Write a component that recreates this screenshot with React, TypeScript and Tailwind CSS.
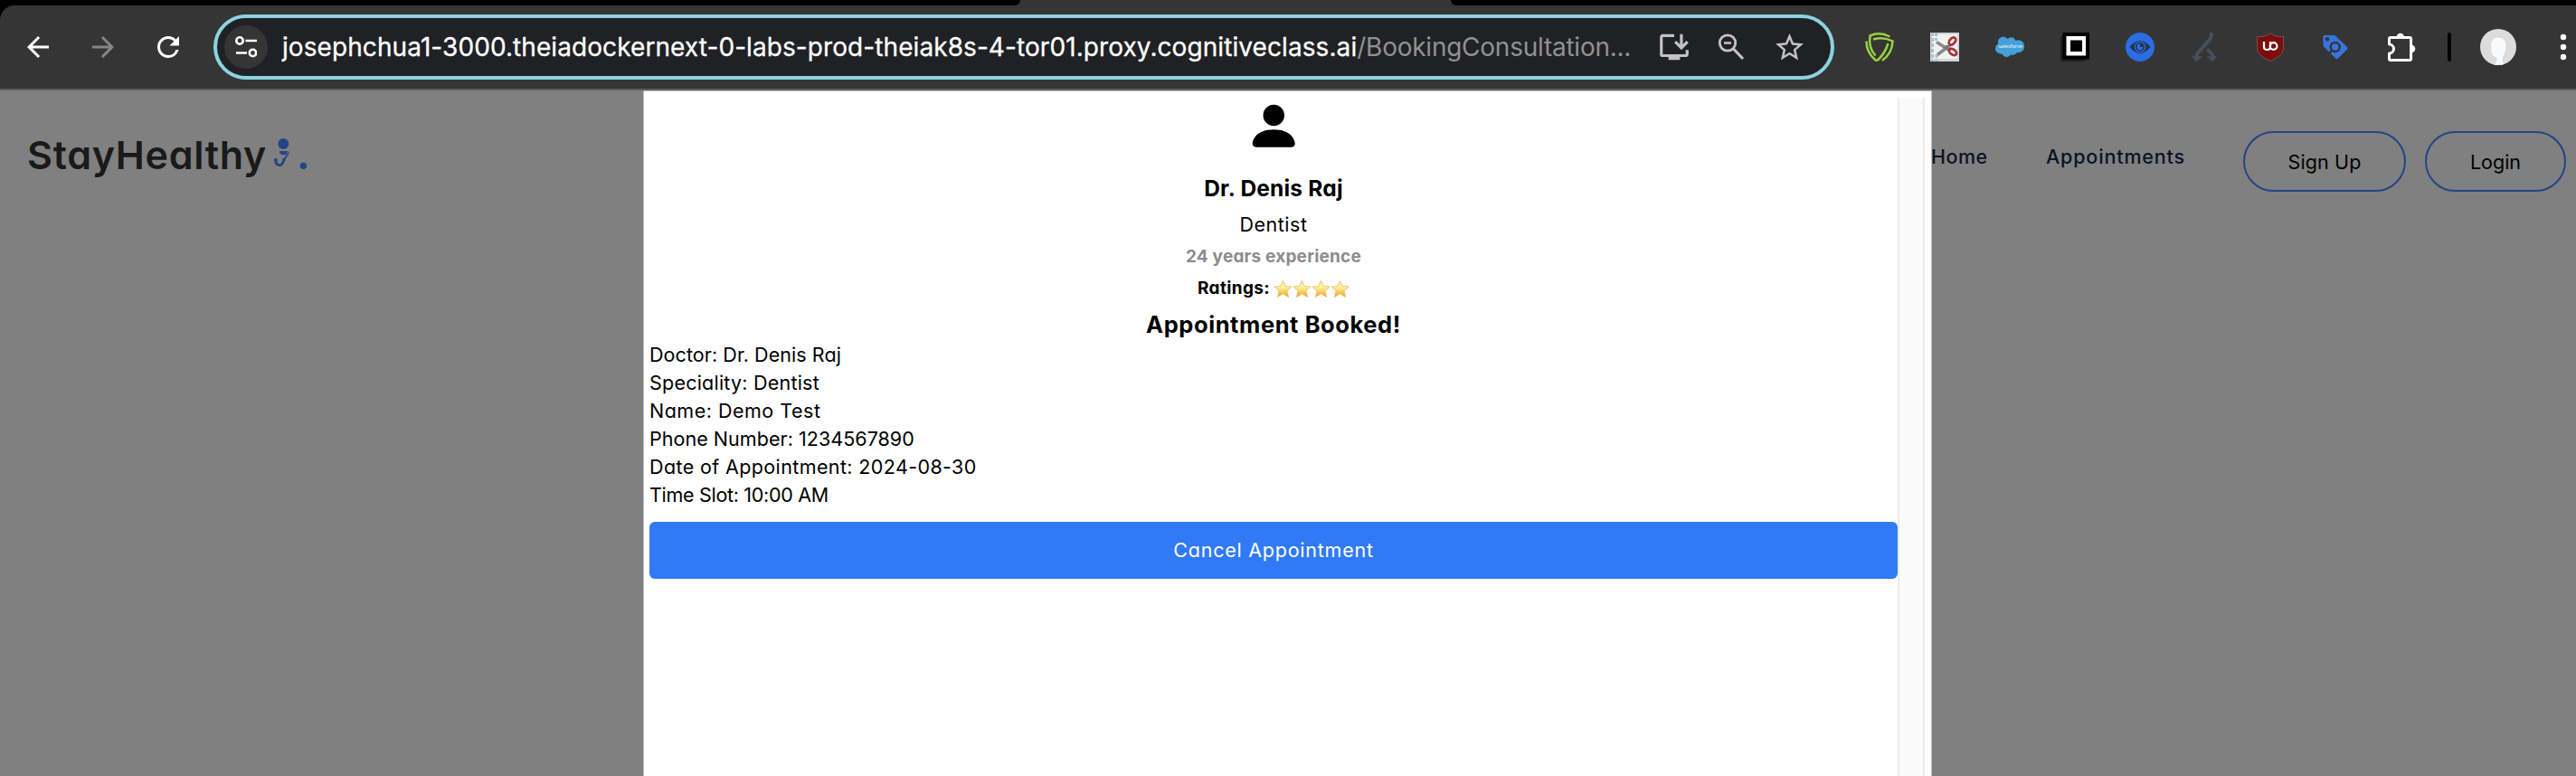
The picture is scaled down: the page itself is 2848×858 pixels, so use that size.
import type { ReactNode } from "react";
import { BsPersonFill } from "react-icons/bs";
import {
  MdArrowBack,
  MdArrowForward,
  MdOutlineInstallDesktop,
  MdRefresh,
  MdStarBorder,
} from "react-icons/md";

function Ext({ children }: { children: ReactNode }) {
  return (
    <svg viewBox="0 0 32 32" className="size-8 shrink-0 overflow-visible">
      {children}
    </svg>
  );
}

function Extensions() {
  return (
    <>
      <Ext>
        <g fill="none" stroke="#97d23d" strokeWidth="2.5">
          <path d="M1.500 9.500Q1.500 22 11 30Q12.500 31.500 14.500 30Q22 23 25.500 12" />
          <path d="M27.500 4.500Q16-1.500 5.500 3.500Q3.500 17 11.500 25.500" />
          <path d="M9 7.500Q20 4 30.500 9.500Q30 23 19 31" />
        </g>
      </Ext>
      <Ext>
        <rect width="32" height="32" fill="#d2d4d6" />
        <rect x="2" y="2" width="28" height="27" fill="#f1f1f1" />
        <path d="M2.500 0v32M6.500 0v9M7 24v8" stroke="#a9bfd0" strokeWidth="3" strokeDasharray="4 2" />
        <path d="M7 10.500l15 9.500M8 24.500l14-10.500" stroke="#8b8b8b" strokeWidth="3.600" />
        <circle cx="18" cy="16.500" r="2.500" fill="#777" />
        <g fill="none" stroke="#a5343a" strokeWidth="2.800">
          <ellipse cx="24.500" cy="9.500" rx="4.600" ry="3" transform="rotate(-50 24.500 9.500)" />
          <ellipse cx="25" cy="21.500" rx="4.600" ry="2.800" transform="rotate(35 25 21.500)" />
        </g>
      </Ext>
      <Ext>
        <path
          d="M3 10C3.500 5 10 3 13.500 7C17 4 21 5 22.500 9C28 6.500 32.500 11 32 16C31.500 20.500 28 22.500 24 22C22 25 19 25 17 24.500C15 28 9.500 28 7.500 23.500C3.500 23.500 0 21.500 0 17.500C0 15 1.500 13.500 3.500 12.500C3 11.500 3 11 3 10Z"
          fill="#459fdb"
        />
        <text x="16.800" y="17" textAnchor="middle" fontSize="5.600" fontFamily="Open Sans, sans-serif" fill="#fff">
          salesforce
        </text>
      </Ext>
      <Ext>
        <path d="M0 4h28v28H0z" fill="#1f1f1f" />
        <path d="M2.500 0H32v29.500H2.500z" fill="#000" />
        <path d="M6.500 4h21.500v21.500H6.500z" fill="#fff" />
        <path d="M11 8.500h13v12.500H11z" fill="#000" />
      </Ext>
      <Ext>
        <circle cx="16" cy="16" r="16" fill="#2a6de5" />
        <path d="M4.500 16Q16 2 27.500 16Q16 30 4.500 16Z" fill="#26324a" />
        <circle cx="16" cy="16" r="5.600" fill="#26324a" stroke="#2a6de5" strokeWidth="1.300" />
        <circle cx="16" cy="16" r="3.400" fill="#2a6de5" />
        <path d="M16 16v-3.600A3.600 3.600 0 0 1 19.600 16z" fill="#26324a" />
      </Ext>
      <Ext>
        <g fill="none" stroke="#45505b" strokeWidth="4">
          <path d="M22.500 0q1.500 5-2.500 9L10 20q-3.500 3.500-4 8" />
          <path d="M18 19q6 3 6.500 9" />
        </g>
        <path d="M.500 25l5.500 2 8-1-8 6zM17 26l7.500 1 5.500-2-5.500 7z" fill="#45505b" />
      </Ext>
      <Ext>
        <path
          d="M16 .700C12 4 6.500 5 1.500 4.500V17c0 6.500 6.500 11 14.500 14.500C24 28 30.500 23.500 30.500 17V4.500C25.500 5 20 4 16 .700Z"
          fill="#7b0d0d"
          stroke="#8c5a5a"
          strokeWidth=".8"
        />
        <g fill="none" stroke="#fff" strokeWidth="2.200">
          <path d="M9 10v6q0 3 3.500 3T16 16v-6" />
          <circle cx="19.600" cy="15" r="3.800" />
        </g>
      </Ext>
      <Ext>
        <path
          d="M3.500 3h10.500q1.500 0 2.500 1L29 16q1.200 1.200 0 2.500L19 28.500q-1.500 1.200-2.800 0L3.500 16Q2.500 15 2.500 13.500V4.500Q2.500 3 3.500 3Z"
          fill="#3674e2"
        />
        <circle cx="7" cy="7.300" r="2.200" fill="#353535" />
        <circle cx="15.700" cy="16" r="5" fill="none" stroke="#353535" strokeWidth="2.500" />
        <path d="M12 20l-4.500 4.500" stroke="#353535" strokeWidth="2.500" />
      </Ext>
      <Ext>
        <path
          d="M5.100 5.500H26q1.600 0 1.600 1.600v21.800q0 1.600-1.600 1.600H5.100q-1.600 0-1.600-1.600V23A5 5 0 0 0 3.500 13V7.100q0-1.600 1.600-1.600Z"
          fill="none"
          stroke="#fff"
          strokeWidth="3"
          strokeLinejoin="round"
        />
        <path d="M11.500 5a4.300 4.300 0 0 1 8.600 0zM28 13.700a4.300 4.300 0 0 1 0 8.600z" fill="#fff" />
      </Ext>
    </>
  );
}

function Star() {
  return (
    <svg viewBox="0 0 21 21" className="size-[21px]">
      <path
        d="M10.500 1.200l2.700 6.300 7 .5-5.300 4.500 1.700 7-6.100-3.700-6.100 3.700 1.700-7L.800 8l7-.5z"
        fill="url(#starFill)"
        stroke="#e9b95c"
        strokeWidth=".8"
        strokeLinejoin="round"
      />
    </svg>
  );
}

function BrowserBar() {
  return (
    <div className="h-[100px] bg-black">
      <div className="flex h-1.5 justify-between bg-[#353535]">
        <div className="w-[1128px] rounded-br-[14px] bg-black" />
        <div className="w-[1244px] rounded-bl-[14px] bg-black" />
      </div>
      <div className="flex h-[94px] items-center rounded-tl-[16px] border-b-2 border-[#5f5f5f] bg-[#353535]">
        <div className="flex items-center gap-9 pl-6">
          <MdArrowBack className="size-9 text-white" />
          <MdArrowForward className="size-9 text-[#858585]" />
          <MdRefresh className="size-9 text-white" />
        </div>
        <div className="ml-8 flex h-[72px] w-[1792px] shrink-0 items-center rounded-full border-4 border-[#8bd3e0] bg-[#202124] pr-[27px] pl-2">
          <div className="flex size-12 items-center justify-center rounded-full bg-[#353535]">
            <svg viewBox="0 0 24 24" className="size-6" fill="none" stroke="#fff" strokeWidth="2.600">
              <circle cx="5" cy="5" r="3.700" />
              <path d="M11.500 5H24M1 18.500h12" />
              <circle cx="19.500" cy="18.500" r="3.700" />
            </svg>
          </div>
          <div className="ml-4 flex w-[1509px] font-['Inter',sans-serif] text-[28px] leading-9 whitespace-nowrap">
            <span className="tracking-[0.08px] text-white [-webkit-text-stroke:0.3px_white]">
              josephchua1-3000.theiadockernext-0-labs-prod-theiak8s-4-tor01.proxy.cognitiveclass.ai
            </span>
            <span className="tracking-[-0.25px] text-[#919191]">/BookingConsultation...</span>
          </div>
          <div className="ml-auto flex shrink-0 items-center gap-[26px] text-[#c3c3c3]">
            <MdOutlineInstallDesktop className="size-[38px]" />
            <svg viewBox="0 0 38 38" className="size-[38px]" fill="none" stroke="currentColor">
              <circle cx="14" cy="14.500" r="8.700" strokeWidth="2.800" />
              <path d="M20.500 21l10.500 11" strokeWidth="3.200" />
              <path d="M10 14.500h8" strokeWidth="2.600" />
            </svg>
            <MdStarBorder className="size-[37px]" />
          </div>
        </div>
        <div className="ml-[34px] flex items-center gap-10">
          <Extensions />
        </div>
        <div className="ml-9 h-8 w-1 shrink-0 rounded-full bg-black" />
        <svg viewBox="0 0 40 40" className="ml-8 size-10 shrink-0 rounded-full">
          <rect width="40" height="40" fill="#dcdcdc" />
          <path
            d="M19.500 9C14 9 11.500 13 11.500 19c0 4 .5 8 2 10.500 1.500 1.500 4.500 1.500 4.500 3.500s-1 5-3 7H27c-1.500-3-2.500-7-1-10 2-3 3-7 3-11.500C29 12 25 9 19.500 9z"
            fill="#f8fbfd"
            stroke="#c8d0d6"
            strokeWidth=".7"
          />
        </svg>
        <svg viewBox="0 0 6 28" className="ml-[49px] h-7 w-1.5 shrink-0 overflow-visible" fill="#fff">
          <circle cx="3" cy="3" r="3.200" />
          <circle cx="3" cy="14" r="3.200" />
          <circle cx="3" cy="25" r="3.200" />
        </svg>
      </div>
    </div>
  );
}

function SiteHeader() {
  return (
    <header className="flex h-[158px] items-start justify-between">
      <div className="flex pt-[52px] pl-[30px]">
        <span className="w-[265px] text-[43px] leading-[39px] font-semibold tracking-[0.7px] whitespace-nowrap text-[#1a1a1a]">
          StayHealthy
        </span>
        <svg viewBox="0 0 18 32" className="mt-px ml-[8px] h-8 w-[18px]">
          <circle cx="10.300" cy="6" r="5.900" fill="#234585" />
          <path d="M6 14h9q0 4.200-4.500 4.200T6 14z" fill="#234585" />
          <path d="M16.800 13.500L16 18Q13 21 11.800 25.500Q9.500 31.500 5.500 31Q1 30 .3 25.500L3.500 26Q4.500 28.500 6.500 28.200Q9 27.500 9.300 23Q13 20 15 16.500Z" fill="#234585" />
          <circle cx="2" cy="24" r="2.100" fill="#234585" />
        </svg>
        <span className="ml-[7px] text-[43px] leading-[39px] font-bold text-[#234585]">.</span>
      </div>
      <nav className="flex pr-[11px] text-[21.5px] text-black">
        <a className="mt-[57px] w-[64px] leading-8 font-medium tracking-[0.5px] text-[#0a1323]">Home</a>
        <a className="mt-[57px] ml-[63px] leading-8 font-medium tracking-[0.85px] text-[#0a1323]">Appointments</a>
        <button className="mt-[45px] ml-[64px] h-[67px] w-[180px] rounded-full border-2 border-[#234585] pt-px tracking-[0.1px]">
          Sign Up
        </button>
        <button className="mt-[45px] ml-[21px] h-[67px] w-[156px] rounded-full border-2 border-[#234585] pt-px">
          Login
        </button>
      </nav>
    </header>
  );
}

function BookingDialog() {
  return (
    <div className="flex w-[1425px] border border-b-0 border-[#bdbdbd] bg-white pt-[7px] pl-1.5 text-black">
      <div className="flex w-[1380px] flex-col items-center">
        <BsPersonFill className="size-[62.5px]" />
        <h3 className="mt-[19px] text-[24.5px] leading-9 font-bold tracking-[0.2px]">Dr. Denis Raj</h3>
        <p className="mt-1.5 text-[21.5px] leading-8 tracking-[0.5px]">Dentist</p>
        <p className="mt-[6px] text-[19px] leading-7 font-bold tracking-[0.2px] text-[#8c8c8c]">24 years experience</p>
        <p className="mt-[7.5px] flex items-center text-[19px] leading-7 font-bold tracking-[0.35px]">
          Ratings:
          <span className="ml-1 flex">
            <Star />
            <Star />
            <Star />
            <Star />
          </span>
        </p>
        <h3 className="mt-2 text-[25.5px] leading-9 font-bold tracking-[0.58px]">Appointment Booked!</h3>
        <div className="w-full text-[21.5px] leading-[31px]">
          <p className="tracking-[0.07px]">Doctor: Dr. Denis Raj</p>
          <p className="tracking-[0.22px]">Speciality: Dentist</p>
          <p className="tracking-[0.5px]">Name: Demo Test</p>
          <p className="tracking-[0.04px]">Phone Number: 1234567890</p>
          <p className="tracking-[0.38px]">Date of Appointment: 2024-08-30</p>
          <p className="tracking-[-0.3px]">Time Slot: 10:00 AM</p>
        </div>
        <button className="mt-[13.5px] h-[63px] w-full rounded-md bg-[#317af6] text-[21.5px] tracking-[0.76px] text-white">
          Cancel Appointment
        </button>
      </div>
      <div className="w-[30px] border-x-2 border-[#ebebeb] bg-[#fafafa]" />
    </div>
  );
}

export default function App() {
  return (
    <div className="flex h-[858px] w-[2848px] flex-col overflow-hidden bg-[#808080] font-['Inter',sans-serif]">
      <svg className="absolute size-0">
        <linearGradient id="starFill" x1="0" y1="0" x2="0" y2="1">
          <stop offset="0" stopColor="#fff3b0" />
          <stop offset=".4" stopColor="#fff39c" />
          <stop offset="1" stopColor="#f0a020" />
        </linearGradient>
      </svg>
      <BrowserBar />
      <div className="relative flex-1 [font-feature-settings:'cv11']">
        <SiteHeader />
        <div className="absolute inset-0 flex justify-center pr-px">
          <BookingDialog />
        </div>
      </div>
    </div>
  );
}
